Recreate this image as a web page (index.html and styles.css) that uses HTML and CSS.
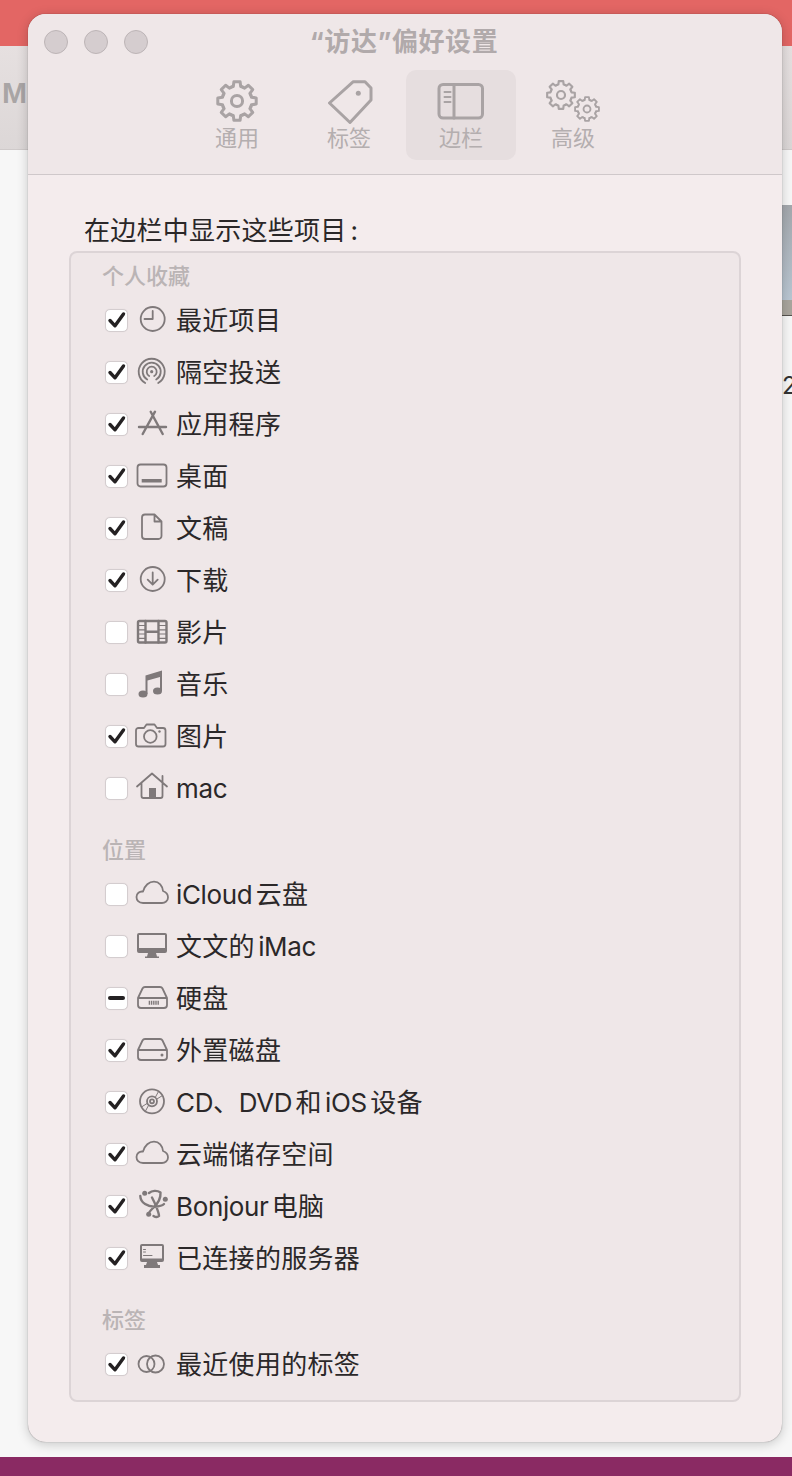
FILE: index.html
```html
<!DOCTYPE html>
<html lang="zh-CN">
<head>
    <meta charset="UTF-8">
    <meta name="viewport" content="width=device-width, initial-scale=1.0">
    <title>“访达”偏好设置</title>
    <link rel="stylesheet" href="styles.css">
</head>
<body>
    <svg class="sprite" aria-hidden="true">
        <defs>
            <path id="tooth" d="M-5.9-13.8A15 15 0 0 1-3.7-14.5L-3.1-19.2H3.1L3.7-14.5A15 15 0 0 1 5.9-13.8"/>
            <g id="gear">
                <use href="#tooth"/>
                <use href="#tooth" transform="rotate(45)"/>
                <use href="#tooth" transform="rotate(90)"/>
                <use href="#tooth" transform="rotate(135)"/>
                <use href="#tooth" transform="rotate(180)"/>
                <use href="#tooth" transform="rotate(225)"/>
                <use href="#tooth" transform="rotate(270)"/>
                <use href="#tooth" transform="rotate(315)"/>
                <circle r="5.6"/>
            </g>
            <path id="cloud" d="M8 26C3.6 26 1.5 23 1.5 20C1.5 16.6 4.5 14 8 14.6C9.6 8.4 14.2 4.6 19 4.6C24 4.6 27.6 8.6 28 14C31 15 33 17.5 33 20.5C33 24 30 26 27 26Z"/>
            <path id="tick" d="M5 11.500L10 16.800L18.500 5"/>
            <path id="drive" d="M10 6H25C26 6 27 6.500 27.500 7.500L32 17V24A3 3 0 0 1 29 27H6A3 3 0 0 1 3 24V17L7.500 7.500C8 6.500 9 6 10 6ZM3 17H32"/>
        </defs>
    </svg>

    <div class="desktop">
        <div class="bg-red"></div>
        <div class="bg-toolbar"><span class="bg-letter">M</span></div>
        <div class="bg-main">
            <div class="bg-side">
                <div class="bg-thumb"></div>
                <div class="bg-strip"></div>
                <div class="bg-year">20</div>
            </div>
        </div>
        <div class="bg-dock"></div>
    </div>

    <div class="prefs-window">
        <div class="window-head">
            <div class="titlebar">
                <div class="lights">
                    <span class="light"></span>
                    <span class="light"></span>
                    <span class="light"></span>
                </div>
                <h1 class="window-title">“访达”偏好设置</h1>
            </div>
            <div class="tabs">
                <div class="tab">
                    <svg class="tab-icon" viewBox="0 0 54 46"><use href="#gear" transform="translate(27 23)"/></svg>
                    <span class="tab-label">通用</span>
                </div>
                <div class="tab">
                    <svg class="tab-icon" viewBox="0 0 54 46">
                        <path d="M31.300 3.700H43L49 10V22L28 44.500L7.500 25Z"/>
                        <circle class="solid" cx="36.300" cy="15.300" r="2.500"/>
                    </svg>
                    <span class="tab-label">标签</span>
                </div>
                <div class="tab is-active">
                    <svg class="tab-icon" viewBox="0 0 54 46">
                        <rect x="5" y="6.500" width="43.500" height="33.500" rx="4"/>
                        <path d="M20 6.500V40"/>
                        <path class="thin" d="M10.500 14H16.500M10.500 19H16.500M10.500 24H16.500"/>
                    </svg>
                    <span class="tab-label">边栏</span>
                </div>
                <div class="tab">
                    <svg class="tab-icon" viewBox="0 0 54 46">
                        <use href="#gear" transform="translate(15 17) scale(.72)"/>
                        <use href="#gear" transform="translate(41 31) scale(.62)"/>
                    </svg>
                    <span class="tab-label">高级</span>
                </div>
            </div>
        </div>

        <div class="window-body">
            <p class="intro">在边栏中显示这些项目<span class="intro-colon">:</span></p>
            <div class="group-box">
                <div class="group-label">个人收藏</div>

                <div class="row">
                    <span class="check on"><svg viewBox="0 0 23 23"><use href="#tick"/></svg></span>
                    <svg class="row-icon" viewBox="0 0 34 34"><circle cx="17.700" cy="16" r="12"/><path d="M17.700 8V16H9.500"/></svg>
                    <span class="row-text">最近项目</span>
                </div>
                <div class="row">
                    <span class="check on"><svg viewBox="0 0 23 23"><use href="#tick"/></svg></span>
                    <svg class="row-icon" viewBox="0 0 34 34">
                        <path d="M10.200 28A13 13 0 1 1 23.200 28M12.200 24.500A9 9 0 1 1 21.200 24.500M14.200 21A5 5 0 1 1 19.200 21"/>
                        <circle class="solid" cx="16.700" cy="16.700" r="1.600"/>
                    </svg>
                    <span class="row-text">隔空投送</span>
                </div>
                <div class="row">
                    <span class="check on"><svg viewBox="0 0 23 23"><use href="#tick"/></svg></span>
                    <svg class="row-icon heavy" viewBox="0 0 34 34"><path d="M15.700 4.700L27.700 27M20 4.700L7.700 27M4 20H31"/></svg>
                    <span class="row-text">应用程序</span>
                </div>
                <div class="row">
                    <span class="check on"><svg viewBox="0 0 23 23"><use href="#tick"/></svg></span>
                    <svg class="row-icon" viewBox="0 0 34 34"><rect x="2.500" y="5.500" width="29" height="22" rx="3"/><rect class="solid" x="6.700" y="20" width="20" height="3.500"/></svg>
                    <span class="row-text">桌面</span>
                </div>
                <div class="row">
                    <span class="check on"><svg viewBox="0 0 23 23"><use href="#tick"/></svg></span>
                    <svg class="row-icon" viewBox="0 0 34 34"><path d="M10 3.500H19.500L26.500 10.500V25A3 3 0 0 1 23.500 28H10A3 3 0 0 1 7 25V6.500A3 3 0 0 1 10 3.500ZM19.500 3.500V10.500H26.500"/></svg>
                    <span class="row-text">文稿</span>
                </div>
                <div class="row">
                    <span class="check on"><svg viewBox="0 0 23 23"><use href="#tick"/></svg></span>
                    <svg class="row-icon" viewBox="0 0 34 34"><circle cx="17.700" cy="16" r="12"/><path d="M17.700 9.500V21.500M12.700 16.700L17.700 21.700L22.700 16.700"/></svg>
                    <span class="row-text">下载</span>
                </div>
                <div class="row">
                    <span class="check"></span>
                    <svg class="row-icon heavy" viewBox="0 0 34 34">
                        <rect x="3" y="6" width="28.500" height="21.500" rx="1.500"/>
                        <path d="M10.500 6V27.500M23.500 6V27.500M10.500 16.700H23.500"/>
                        <path class="thin" d="M3 10.500H10.500M3 14.800H10.500M3 19H10.500M3 23.300H10.500M23.500 10.500H31.500M23.500 14.800H31.500M23.500 19H31.500M23.500 23.300H31.500"/>
                    </svg>
                    <span class="row-text">影片</span>
                </div>
                <div class="row">
                    <span class="check"></span>
                    <svg class="row-icon" viewBox="0 0 34 34">
                        <path class="solid" d="M10.500 8.500L27 3.500V24H25V10L12.500 13.500V27H10.500Z"/>
                        <ellipse class="solid" cx="8" cy="27" rx="4.500" ry="3.500"/>
                        <ellipse class="solid" cx="22.500" cy="24" rx="4.500" ry="3.500"/>
                    </svg>
                    <span class="row-text">音乐</span>
                </div>
                <div class="row">
                    <span class="check on"><svg viewBox="0 0 23 23"><use href="#tick"/></svg></span>
                    <svg class="row-icon" viewBox="0 0 34 34">
                        <path d="M3.500 9H9L11.500 5.500H19.500L22 9H28A2.500 2.500 0 0 1 30.500 11.500V25A2.500 2.500 0 0 1 28 27.500H3.500A2.500 2.500 0 0 1 1 25V11.500A2.500 2.500 0 0 1 3.500 9Z"/>
                        <circle cx="15.300" cy="17.500" r="6.300"/>
                        <circle class="solid" cx="24.500" cy="12.500" r="1.200"/>
                    </svg>
                    <span class="row-text">图片</span>
                </div>
                <div class="row">
                    <span class="check"></span>
                    <svg class="row-icon" viewBox="0 0 34 34">
                        <path d="M2 15.500L17 2.500L32 15.500M6.500 12V25A2 2 0 0 0 8.500 27H25.500A2 2 0 0 0 27.500 25V5"/>
                        <rect class="solid" x="14" y="17" width="7" height="10"/>
                    </svg>
                    <span class="row-text latin">mac</span>
                </div>

                <div class="group-label spaced">位置</div>

                <div class="row">
                    <span class="check"></span>
                    <svg class="row-icon" viewBox="0 0 34 34"><use href="#cloud"/></svg>
                    <span class="row-text"><span class="latin">iCloud</span>云盘</span>
                </div>
                <div class="row">
                    <span class="check"></span>
                    <svg class="row-icon" viewBox="0 0 34 34">
                        <path class="solid" d="M4 4H30A2 2 0 0 1 32 6V22A2 2 0 0 1 30 24H21L22 27.500H24V29H10V27.500H12L13 24H4A2 2 0 0 1 2 22V6A2 2 0 0 1 4 4ZM4 6V19H30V6Z"/>
                    </svg>
                    <span class="row-text">文文的<span class="latin">iMac</span></span>
                </div>
                <div class="row">
                    <span class="check mixed"></span>
                    <svg class="row-icon" viewBox="0 0 34 34">
                        <use href="#drive"/>
                        <path class="grille" d="M13.700 21.700H24.300"/>
                    </svg>
                    <span class="row-text">硬盘</span>
                </div>
                <div class="row">
                    <span class="check on"><svg viewBox="0 0 23 23"><use href="#tick"/></svg></span>
                    <svg class="row-icon" viewBox="0 0 34 34">
                        <use href="#drive"/>
                        <circle class="solid" cx="27" cy="22" r="1.500"/>
                    </svg>
                    <span class="row-text">外置磁盘</span>
                </div>
                <div class="row">
                    <span class="check on"><svg viewBox="0 0 23 23"><use href="#tick"/></svg></span>
                    <svg class="row-icon" viewBox="0 0 34 34">
                        <circle cx="17" cy="16.300" r="12"/>
                        <circle cx="17" cy="16.300" r="5"/>
                        <circle cx="17" cy="16.300" r="2"/>
                        <path class="thin-line" d="M20.500 12L23.500 6.500M22 14L27.500 10.500M13.500 20.500L10.500 26M12 18.500L6.500 22"/>
                    </svg>
                    <span class="row-text"><span class="latin">CD、DVD</span>和<span class="latin">iOS</span>设备</span>
                </div>
                <div class="row">
                    <span class="check on"><svg viewBox="0 0 23 23"><use href="#tick"/></svg></span>
                    <svg class="row-icon" viewBox="0 0 34 34"><use href="#cloud"/></svg>
                    <span class="row-text">云端储存空间</span>
                </div>
                <div class="row">
                    <span class="check on"><svg viewBox="0 0 23 23"><use href="#tick"/></svg></span>
                    <svg class="row-icon heavy" viewBox="0 0 34 34">
                        <path d="M5.300 7C5.500 14 13 18 20 17.700C24 17.500 27.500 16.500 29 15M14 4C17 1.500 22 1 25.500 3.500C26 10 22.500 15 18 19C15 22 13 24 13.700 25.300M17 8.500C20 14 24 24 24 27C22 29 20 28 18.500 27"/>
                        <circle class="solid" cx="9.700" cy="4.300" r="2.500"/>
                        <circle class="solid" cx="30.300" cy="10.300" r="2.500"/>
                        <circle class="solid" cx="13.700" cy="25.300" r="2.500"/>
                    </svg>
                    <span class="row-text"><span class="latin">Bonjour</span>电脑</span>
                </div>
                <div class="row">
                    <span class="check on"><svg viewBox="0 0 23 23"><use href="#tick"/></svg></span>
                    <svg class="row-icon" viewBox="0 0 34 34">
                        <path class="solid" d="M7 3H27A2 2 0 0 1 29 5V19A2 2 0 0 1 27 21H22L23 24H25V27H9V24H11L12 21H7A2 2 0 0 1 5 19V5A2 2 0 0 1 7 3ZM7 5V17.500H27V5Z"/>
                        <path class="thin-line" d="M8.500 8.500H10.500M8.500 11H10.500M8.500 14.500H17"/>
                    </svg>
                    <span class="row-text">已连接的服务器</span>
                </div>

                <div class="group-label spaced">标签</div>

                <div class="row">
                    <span class="check on"><svg viewBox="0 0 23 23"><use href="#tick"/></svg></span>
                    <svg class="row-icon" viewBox="0 0 34 34"><circle cx="11.500" cy="17" r="8"/><circle cx="20.500" cy="17" r="8.500"/></svg>
                    <span class="row-text">最近使用的标签</span>
                </div>
            </div>
        </div>
    </div>
</body>
</html>
```

FILE: styles.css
```css
html, body {
    margin: 0;
    padding: 0;
}
body {
    position: relative;
    height: 1476px;
    overflow: hidden;
    font-family: "Inter", "Noto Sans CJK SC", sans-serif;
    background-color: #f8f8f8;
}
.sprite {
    display: none;
}

/* what shows behind the window */
.desktop {
    display: flex;
    flex-direction: column;
    height: 100%;
}
.bg-red {
    height: 46px;
    background-color: #e36664;
}
.bg-toolbar {
    height: 104px;
    box-sizing: border-box;
    padding-top: 30px;
    background: linear-gradient(#e6e0e0, #dcd7d7);
    border-bottom: 1px solid #cfcaca;
}
.bg-letter {
    margin-left: 2px;
    font-size: 30px;
    font-weight: 700;
    color: #a9a5a5;
    font-family: "Liberation Sans", sans-serif;
}
.bg-main {
    flex: 1;
    display: flex;
    justify-content: flex-end;
    padding-top: 55px;
    background-color: #f7f7f7;
}
.bg-side {
    width: 10px;
    overflow: hidden;
}
.bg-thumb {
    height: 95px;
    background: linear-gradient(#a4a8ad, #b9c6d2);
}
.bg-strip {
    height: 15px;
    background-color: #a9a59d;
    border-bottom: 1px solid #55524e;
}
.bg-year {
    margin-top: 55px;
    font-size: 24px;
    color: #333;
    white-space: nowrap;
}
.bg-dock {
    height: 19px;
    background-color: #8a2a63;
}

/* preferences window */
.prefs-window {
    position: absolute;
    left: 28px;
    top: 14px;
    width: 754px;
    height: 1428px;
    box-sizing: border-box;
    border-radius: 18px;
    background-color: #f4eced;
    box-shadow: 0 0 1px rgba(0, 0, 0, 0.5), 0 2px 12px rgba(0, 0, 0, 0.2);
    overflow: hidden;
}
.window-head {
    height: 160px;
    background-color: #efe7e8;
    border-bottom: 1px solid #cfc8ca;
}
.titlebar {
    position: relative;
    height: 56px;
    display: flex;
    align-items: center;
    justify-content: center;
}
.lights {
    position: absolute;
    left: 16px;
    top: 16px;
    display: flex;
    gap: 16px;
}
.light {
    width: 24px;
    height: 24px;
    box-sizing: border-box;
    border-radius: 50%;
    background-color: #d5cdcf;
    border: 1px solid #bcb4b6;
}
.window-title {
    margin: 0 2px 6px 0;
    font-family: "Inter", "Noto Sans CJK SC", sans-serif;
    font-size: 26px;
    font-weight: 700;
    letter-spacing: 0.6px;
    color: #b1aaab;
}
.tabs {
    display: flex;
    justify-content: center;
    gap: 2px;
}
.tab {
    width: 110px;
    height: 90px;
    box-sizing: border-box;
    padding-top: 8px;
    display: flex;
    flex-direction: column;
    align-items: center;
    border-radius: 10px;
}
.tab.is-active {
    background-color: #e6dedf;
}
.tab-icon {
    width: 54px;
    height: 46px;
    fill: none;
    stroke: #a9a3a4;
    stroke-width: 3;
    stroke-linejoin: round;
    stroke-linecap: round;
}
.tab-icon .solid {
    fill: #a9a3a4;
    stroke: none;
}
.tab-icon .thin {
    stroke-width: 2;
}
.tab-label {
    font-size: 22px;
    line-height: 28px;
    color: #b4aeaf;
}

.window-body {
    padding: 38px 41px 0;
}
.intro {
    margin: 0 0 2px 15px;
    font-size: 26px;
    line-height: 36px;
    letter-spacing: 0.25px;
    color: #2a2728;
}
.intro-colon {
    margin-left: 4px;
}
.group-box {
    padding: 8px 0 10px;
    background-color: #efe7e8;
    border: 2px solid #dcd4d6;
    border-radius: 8px;
}
.group-label {
    margin-bottom: 3px;
    padding-left: 31px;
    font-size: 22px;
    font-weight: 500;
    line-height: 30px;
    color: #bab4b5;
}
.group-label.spaced {
    margin-top: 21px;
}
.row {
    height: 52px;
    display: flex;
    align-items: center;
    padding-left: 34px;
}
.check {
    width: 23px;
    height: 23px;
    box-sizing: border-box;
    margin-right: 7px;
    border-radius: 5px;
    background-color: #fff;
    border: 1px solid #d4cdcf;
    box-shadow: 0 0 1px rgba(0, 0, 0, 0.1);
    position: relative;
}
.check svg {
    position: absolute;
    left: -1px;
    top: -1px;
    width: 23px;
    height: 23px;
    fill: none;
    stroke: #242122;
    stroke-width: 3.4;
    stroke-linecap: round;
    stroke-linejoin: round;
}
.check.mixed::after {
    content: "";
    position: absolute;
    left: 2px;
    right: 2px;
    top: 8px;
    height: 4px;
    border-radius: 2px;
    background-color: #242122;
}
.row-icon {
    width: 34px;
    height: 34px;
    margin-right: 7px;
    flex-shrink: 0;
    fill: none;
    stroke: #7f797a;
    stroke-width: 1.8;
    stroke-linejoin: round;
    stroke-linecap: round;
}
.row-icon.heavy {
    stroke-width: 2.4;
}
.row-icon .solid {
    fill: #7f797a;
    stroke: none;
}
.row-icon .thin {
    stroke-width: 1.2;
    stroke-linecap: butt;
}
.row-icon .thin-line {
    stroke-width: 1;
}
.row-icon .grille {
    stroke-width: 4;
    stroke-linecap: butt;
    stroke-dasharray: 1.4 0.8;
}
.row-text {
    padding-top: 2px;
    font-size: 26px;
    line-height: 36px;
    letter-spacing: 0.3px;
    color: #2b2829;
    text-autospace: normal;
}
.latin {
    letter-spacing: -0.35px;
}
```
